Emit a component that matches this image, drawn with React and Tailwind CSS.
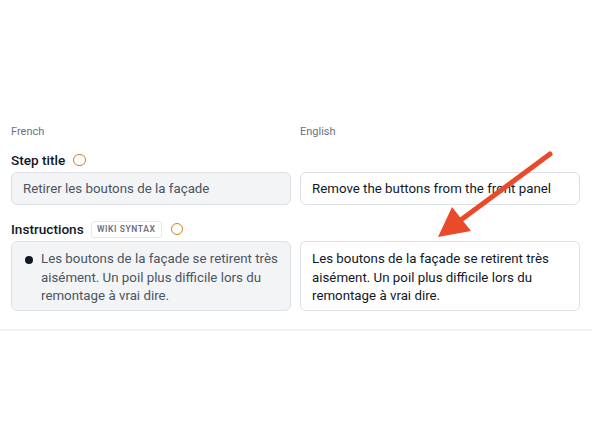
import React from "react";

function Ring({ ml }) {
  return (
    <span className={"inline-block w-[12.5px] h-[12.5px] rounded-full border-[1.5px] border-[#cc8226] " + (ml || "")} />
  );
}

export default function App() {
  const font = { fontFamily: "Roboto, 'Liberation Sans', sans-serif" };
  return (
    <div className="relative w-[592px] h-[444px] bg-white overflow-hidden" style={font}>
      <div className="pt-[124px]">
        <div className="px-[11px] grid grid-cols-[280px_280px] gap-x-[9px]">
          <div className="h-[16px] flex items-center text-[11px] text-[#6b7280]">French</div>
          <div className="h-[16px] flex items-center text-[11px] text-[#6b7280]">English</div>

          <div className="mt-[10px] h-[20px] flex items-center text-[13.6px] font-medium text-[#111827]">
            <span>Step title</span>
            <Ring ml="ml-[8px]" />
          </div>
          <div className="mt-[10px] h-[20px]" />

          <div className="mt-[2px] h-[33px] rounded-[6px] border border-[#dcdfe3] bg-[#f3f4f6] flex items-center px-[11px] text-[13.3px] text-[#4b5563] whitespace-nowrap">
            Retirer les boutons de la façade
          </div>
          <div className="mt-[2px] h-[33px] rounded-[6px] border border-[#dcdfe3] bg-white flex items-center px-[11px] text-[13.3px] text-[#111827] whitespace-nowrap">
            Remove the buttons from the front panel
          </div>

          <div className="mt-[14px] h-[20px] flex items-center text-[13.6px] font-medium text-[#111827]">
            <span>Instructions</span>
            <span className="ml-[7px] h-[17px] w-[71px] justify-center flex items-center rounded-[3px] border border-[#e5e7eb] text-[8.5px] font-semibold tracking-[0.07em] text-[#6b7280]">
              WIKI SYNTAX
            </span>
            <Ring ml="ml-[9px]" />
          </div>
          <div className="mt-[14px] h-[20px]" />

          <div className="mt-[2px] h-[70px] rounded-[6px] border border-[#dcdfe3] bg-[#f3f4f6] pt-[8px] pl-[13px] pr-[8px] flex text-[13.3px] leading-[18.5px] text-[#4b5563]">
            <span className="mt-[6px] w-[8px] h-[8px] rounded-full bg-[#111827] shrink-0 mr-[8px]" />
            <span>Les boutons de la façade se retirent très aisément. Un poil plus difficile lors du remontage à vrai dire.</span>
          </div>
          <div className="mt-[2px] h-[70px] rounded-[6px] border border-[#dcdfe3] bg-white pt-[8px] px-[11px] text-[13.3px] leading-[18.5px] text-[#111827]">
            Les boutons de la façade se retirent très aisément. Un poil plus difficile lors du remontage à vrai dire.
          </div>
        </div>
        <div className="mt-[18px] h-[2px] bg-[#f0f0f0]" />
      </div>

      <svg className="absolute left-0 top-0" width="592" height="444" viewBox="0 0 592 444">
        <line x1="550" y1="154" x2="458" y2="222" stroke="#ea4a2a" strokeWidth="5" strokeLinecap="round" />
        <polygon points="438,237 452,207 471,231" fill="#ea4a2a" />
      </svg>
    </div>
  );
}
